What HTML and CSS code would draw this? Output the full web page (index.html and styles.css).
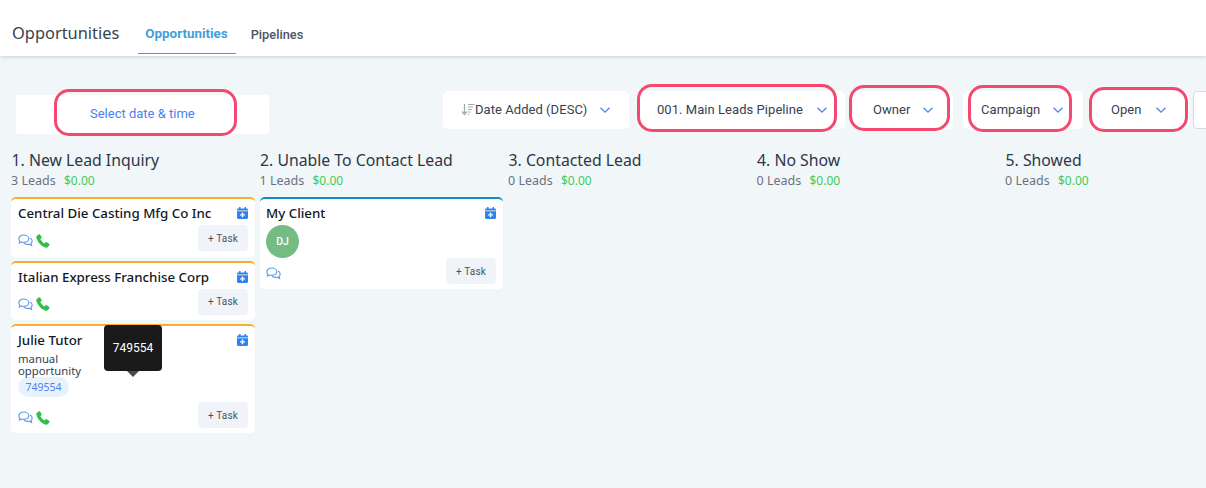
FILE: index.html
```html
<!DOCTYPE html>
<html lang="en">
<head>
<meta charset="utf-8">
<title>Opportunities</title>
<link rel="stylesheet" href="styles.css">
</head>
<body>
<svg class="defs" width="0" height="0" aria-hidden="true">
  <symbol id="chev" viewBox="0 0 12 12"><path d="M1.5 3.8 6 8.2l4.5-4.4" fill="none" stroke="currentColor" stroke-width="1.2"/></symbol>
  <symbol id="cal" viewBox="0 0 12 13"><path fill="currentColor" fill-rule="evenodd" d="M2.200 0h1.600v1.600h4.400V0h1.600v1.600h.9c.7 0 1.300.6 1.300 1.300v8.800c0 .7-.6 1.300-1.300 1.300H1.300C.6 13 0 12.400 0 11.700V2.900c0-.7.6-1.300 1.300-1.300h.9zM0 3.900v.8h12v-.8zM5.200 6v1.900H3.300v1.400h1.900v1.900h1.600V9.300h1.900V7.900H6.800V6z"/></symbol>
  <symbol id="chat" viewBox="0 0 15 13"><g fill="none" stroke="currentColor" stroke-width="1.100"><path d="M5.800 1C3 1 .8 2.600.8 4.700c0 1 .5 1.800 1.200 2.400L1.400 9l2.400-1c.6.200 1.300.3 2 .3 2.800 0 5-1.600 5-3.600S8.600 1 5.800 1z"/><path d="M11.900 4.100c1.400.6 2.300 1.700 2.300 2.900 0 .9-.4 1.600-1.100 2.200l.5 2.200-2.500-1.200c-.5.100-1 .200-1.500.200-1.700 0-3.200-.7-3.900-1.800"/></g></symbol>
  <symbol id="phone" viewBox="0 0 14 14"><path fill="currentColor" d="M2.800.4.900 1.800C.3 2.300.2 3 .4 3.800c.8 2.700 2.200 5 4 6.800 1.800 1.700 3.600 2.700 5.600 3.100.8.100 1.400-.100 1.900-.7l1.500-1.800c.3-.4.300-.9-.1-1.200l-2.600-1.800c-.4-.3-.8-.2-1.100.1l-1 1.100C7.100 9 5.300 7.100 4.300 5.100l1.100-.9c.4-.3.500-.8.200-1.200L4 .6C3.700.2 3.200.1 2.800.4z"/></symbol>
</svg>

<header class="topbar">
  <h1 class="page-title">Opportunities</h1>
  <nav class="tabs">
    <a class="tab tab-active">Opportunities</a>
    <a class="tab">Pipelines</a>
  </nav>
</header>

<section class="filters">
  <div class="date-box">
    <span class="date-text">Select date &amp; time<i class="ring ring-date"></i></span>
  </div>
  <div class="selects">
    <div class="select select-sort">
      <svg class="sort-icon" viewBox="0 0 14 14" aria-hidden="true"><path d="M3.500 1v10M1 8.500 3.500 11.500 6 8.500" fill="none" stroke="currentColor" stroke-width="1.300"/><path d="M7 1.500h6.500M7 4h5M7 6.500h3.800M7 9h2.600M7 11.500h1.300" stroke="currentColor" stroke-width="1.200"/></svg>
      <span>Date Added (DESC)</span>
      <svg class="chev"><use href="#chev"/></svg>
    </div>
    <div class="select select-pipeline">
      <span>001. Main Leads Pipeline</span>
      <svg class="chev"><use href="#chev"/></svg>
      <i class="ring ring-pipeline"></i>
    </div>
    <div class="select select-owner">
      <span>Owner</span>
      <svg class="chev"><use href="#chev"/></svg>
      <i class="ring ring-owner"></i>
    </div>
    <div class="select select-campaign">
      <span>Campaign</span>
      <svg class="chev"><use href="#chev"/></svg>
      <i class="ring ring-campaign"></i>
    </div>
    <div class="select select-open">
      <span>Open</span>
      <svg class="chev"><use href="#chev"/></svg>
      <i class="ring ring-open"></i>
    </div>
    <div class="stub"></div>
  </div>
</section>

<main class="board">
  <section class="column">
    <h2 class="col-title">1. New Lead Inquiry</h2>
    <p class="col-meta">3 Leads <span class="money">$0.00</span></p>
    <article class="card">
      <div class="card-head"><h3 class="card-name">Central Die Casting Mfg Co Inc</h3><svg class="cal"><use href="#cal"/></svg></div>
      <div class="card-foot">
        <div class="icons"><svg class="chat"><use href="#chat"/></svg><svg class="phone"><use href="#phone"/></svg></div>
        <button class="task">+ Task</button>
      </div>
    </article>
    <article class="card">
      <div class="card-head"><h3 class="card-name">Italian Express Franchise Corp</h3><svg class="cal"><use href="#cal"/></svg></div>
      <div class="card-foot">
        <div class="icons"><svg class="chat"><use href="#chat"/></svg><svg class="phone"><use href="#phone"/></svg></div>
        <button class="task">+ Task</button>
      </div>
    </article>
    <article class="card card-long">
      <div class="card-head"><h3 class="card-name">Julie Tutor</h3><svg class="cal"><use href="#cal"/></svg></div>
      <p class="card-desc">manual<br>opportunity</p>
      <span class="tag">749554</span>
      <div class="tooltip">749554</div>
      <div class="card-foot foot-long">
        <div class="icons"><svg class="chat"><use href="#chat"/></svg><svg class="phone"><use href="#phone"/></svg></div>
        <button class="task">+ Task</button>
      </div>
    </article>
  </section>

  <section class="column">
    <h2 class="col-title">2. Unable To Contact Lead</h2>
    <p class="col-meta">1 Leads <span class="money">$0.00</span></p>
    <article class="card card-blue">
      <div class="card-head"><h3 class="card-name">My Client</h3><svg class="cal"><use href="#cal"/></svg></div>
      <div class="avatar">DJ</div>
      <div class="card-foot foot-client">
        <div class="icons"><svg class="chat"><use href="#chat"/></svg></div>
        <button class="task">+ Task</button>
      </div>
    </article>
  </section>

  <section class="column">
    <h2 class="col-title">3. Contacted Lead</h2>
    <p class="col-meta">0 Leads <span class="money">$0.00</span></p>
  </section>

  <section class="column">
    <h2 class="col-title">4. No Show</h2>
    <p class="col-meta">0 Leads <span class="money">$0.00</span></p>
  </section>

  <section class="column">
    <h2 class="col-title">5. Showed</h2>
    <p class="col-meta">0 Leads <span class="money">$0.00</span></p>
  </section>
</main>
</body>
</html>
```
FILE: styles.css
```css
* { box-sizing: border-box; }

html, body {
  margin: 0;
  height: 100%;
  overflow: hidden;
}

body {
  background: #f1f6f9;
  color: #2d3748;
  font-family: "Noto Sans", sans-serif;
}

.defs { display: block; height: 0; }

.topbar {
  display: flex;
  height: 56px;
  padding-left: 12px;
  background: #fff;
  box-shadow: 0 1px 4px rgba(0, 0, 0, .16);
}

.page-title {
  margin: 21px 0 0;
  font-size: 16.400px;
  line-height: 24px;
  font-weight: 400;
  color: #374151;
}

.tabs {
  display: flex;
  margin-left: 19px;
}

.tab {
  height: 54px;
  padding: 27px 7px 0;
  font-family: Roboto, sans-serif;
  font-size: 12.800px;
  line-height: 16px;
  font-weight: 500;
  color: #4b5563;
}

.tab-active {
  padding: 26px 8px 0 7px;
  margin-right: 8px;
  font-size: 13.400px;
  font-weight: 700;
  color: #3f9fdc;
  border-bottom: 1px solid #3f9fdc;
}

.filters {
  display: flex;
  justify-content: space-between;
  align-items: flex-start;
  padding: 35px 0 0 16px;
  font-family: Roboto, sans-serif;
}

.date-box {
  width: 253px;
  height: 39px;
  margin-top: 4px;
  padding-top: 11px;
  padding-left: 74px;
  background: #fff;
  border-radius: 3px;
}

.date-text {
  position: relative;
  display: block;
  font-size: 13px;
  line-height: 16px;
  color: #4a82f0;
}

.selects {
  display: flex;
  margin-right: -25px;
}

.select {
  position: relative;
  display: flex;
  align-items: center;
  height: 38px;
  padding-bottom: 1px;
  background: #fff;
  border-radius: 5px;
  font-size: 13px;
  letter-spacing: .05px;
  color: #374151;
}

.select-sort { width: 186px; padding-left: 18px; margin-right: 8px; }
.select-pipeline { width: 208px; padding-left: 20px; margin-right: 8px; }
.select-owner { width: 100px; padding-left: 20px; margin-right: 10px; }
.select-campaign { width: 120px; padding-left: 18px; margin-right: 8px; }
.select-open { width: 98px; padding-left: 20px; margin-right: 4px; }

.sort-icon {
  width: 14px;
  height: 14px;
  color: #a4a9b2;
}

.chev {
  width: 12px;
  height: 12px;
  margin-left: 12px;
  color: #4a82f0;
}

.select-pipeline .chev,
.select-open .chev { margin-left: 13px; }

.stub {
  width: 38px;
  height: 38px;
  background: #fff;
  border: 1px solid #d5d9e0;
  border-radius: 4px;
}

.ring {
  position: absolute;
  border: 3px solid #f5486f;
  border-radius: 15px;
  pointer-events: none;
}

.ring-date { left: -36px; top: -17px; width: 183px; height: 47px; }
.ring-pipeline { left: 0; top: -7px; width: 200px; height: 48px; }
.ring-owner { left: -4px; top: -6px; width: 101px; height: 46px; }
.ring-campaign { left: 5px; top: -6px; width: 104px; height: 47px; }
.ring-open { left: -2px; top: -4px; width: 99px; height: 45px; }

.board {
  display: grid;
  grid-template-columns: repeat(5, 248.500px);
  margin-top: 15px;
  padding-left: 11px;
}

.column { width: 244px; }

.col-title {
  margin: 0;
  padding-left: .5px;
  font-size: 15.800px;
  line-height: 22px;
  font-weight: 400;
  color: #2d3748;
}

.col-meta {
  margin: 2px 0 8px;
  font-size: 12.500px;
  line-height: 16px;
  color: #6b7280;
}

.money {
  margin-left: 5px;
  font-size: 12px;
  color: #3fcb5a;
}

.card {
  position: relative;
  height: 59.500px;
  margin-bottom: 4px;
  padding: 5px 7px 0;
  background: #fff;
  border-top: 2px solid #f5ae2d;
  border-radius: 5px;
}

.card-long { height: 109px; }

.card-blue {
  height: 92px;
  margin-right: .5px;
  padding-left: 6.500px;
  border-top-color: #0b8fc4;
}

.card-head {
  display: flex;
  justify-content: space-between;
  align-items: flex-start;
}

.card-name {
  margin: 0;
  font-size: 13.300px;
  line-height: 18px;
  font-weight: 500;
  color: #111827;
}

.cal {
  width: 11px;
  height: 12px;
  margin-top: 3px;
  color: #2f80f0;
}

.card-foot {
  display: flex;
  justify-content: space-between;
  align-items: center;
  margin-top: 3.300px;
}

.foot-long { margin-top: 5px; }
.foot-client { margin-top: 0; }

.icons {
  display: flex;
  align-items: center;
  gap: 3px;
  margin-top: 5px;
}

.chat {
  width: 15px;
  height: 13px;
  color: #5b9be8;
}

.phone {
  width: 14px;
  height: 14px;
  color: #2fbe48;
}

.task {
  width: 50px;
  height: 26px;
  padding: 0;
  border: 0;
  border-radius: 4px;
  background: #f0f3f7;
  font-family: Roboto, sans-serif;
  font-size: 10px;
  letter-spacing: .2px;
  color: #4b5563;
}

.card-desc {
  margin: 4px 0 0;
  font-size: 11.300px;
  line-height: 12px;
  color: #374151;
}

.tag {
  display: block;
  width: 51px;
  height: 20px;
  border-radius: 10px;
  background: #e8f2fd;
  font-size: 10.500px;
  line-height: 20px;
  text-align: center;
  color: #4a82f0;
}

.tooltip {
  position: absolute;
  left: 93px;
  top: -1px;
  width: 58px;
  height: 46px;
  background: #1a1a1a;
  border-radius: 4px;
  color: #fff;
  font-family: Roboto, sans-serif;
  font-size: 12px;
  line-height: 46px;
  text-align: center;
}

.tooltip::after {
  content: "";
  position: absolute;
  left: 23px;
  bottom: -6px;
  border-style: solid;
  border-width: 6px 6px 0;
  border-color: #4b4b4b transparent transparent;
}

.avatar {
  width: 33px;
  height: 33px;
  margin-top: 3px;
  border-radius: 50%;
  background: #74bb84;
  color: #fff;
  font-family: Roboto, sans-serif;
  font-size: 10.500px;
  font-weight: 500;
  line-height: 33px;
  text-align: center;
}
```
